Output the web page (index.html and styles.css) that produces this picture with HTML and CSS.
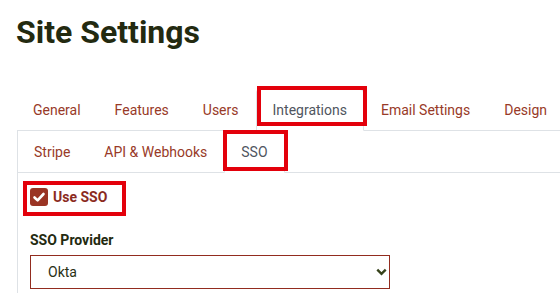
FILE: index.html
```html
<!DOCTYPE html>
<html lang="en">
<head>
    <meta charset="UTF-8">
    <meta name="viewport" content="width=device-width, initial-scale=1.0">
    <title>Site Settings</title>
    <link rel="stylesheet" href="styles.css">
</head>
<body>
    <div class="page">
        <h1 class="title">Site Settings</h1>

        <ul class="tabs main-tabs">
            <li><a href="#" class="tab">General</a></li>
            <li><a href="#" class="tab">Features</a></li>
            <li><a href="#" class="tab">Users</a></li>
            <li><a href="#" class="tab active marked marked-main">Integrations</a></li>
            <li><a href="#" class="tab">Email Settings</a></li>
            <li><a href="#" class="tab">Design</a></li>
        </ul>

        <div class="panel">
            <ul class="tabs sub-tabs">
                <li><a href="#" class="tab">Stripe</a></li>
                <li><a href="#" class="tab">API &amp; Webhooks</a></li>
                <li><a href="#" class="tab active marked marked-sub">SSO</a></li>
            </ul>

            <div class="panel-body">
                <label class="check marked marked-check">
                    <input type="checkbox" checked>
                    <span class="check-box">
                        <svg width="18" height="18" viewBox="0 0 18 18">
                            <polyline points="4.5,9.5 7.6,12.4 13.5,6" fill="none" stroke="#fff" stroke-width="2.6" stroke-linecap="round" stroke-linejoin="round"/>
                        </svg>
                    </span>
                    Use SSO
                </label>

                <label class="field-label" for="ssoProvider">SSO Provider</label>
                <div class="select-wrap">
                    <select id="ssoProvider" class="select">
                        <option>Okta</option>
                        <option>Azure AD</option>
                        <option>Google Workspace</option>
                    </select>
                    <svg class="chevron" width="11" height="8" viewBox="0 0 11 8">
                        <polyline points="1.3,1.6 5.5,5.8 9.7,1.6" fill="none" stroke="#36421a" stroke-width="2.4"/>
                    </svg>
                </div>
            </div>
        </div>
    </div>
</body>
</html>
```

FILE: styles.css
```css
body {
    margin: 0;
    padding: 0;
    font-family: 'Roboto', 'Liberation Sans', sans-serif;
    background: #fff;
    color: #232a10;
}

.page {
    padding: 13px 0 0 17px;
}

/* Heading */
.title {
    margin: 0;
    margin-left: -1px;
    font-size: 32px;
    line-height: 38px;
    font-weight: bold;
    color: #232a10;
}

/* Tabs */
.tabs {
    display: flex;
    list-style: none;
    margin: 0;
    padding: 0;
    border-bottom: 1px solid #dee2e6;
}

.main-tabs {
    margin-top: 38px;
}

.main-tabs li:first-child .tab {
    margin-left: -1px;
}

.tab {
    display: block;
    position: relative;
    margin-bottom: -1px;
    padding: 8px 16px;
    font-size: 14px;
    line-height: 24px;
    color: #983a28;
    text-decoration: none;
    white-space: nowrap;
    border: 1px solid transparent;
    border-top-left-radius: 4px;
    border-top-right-radius: 4px;
}

.tab.active {
    color: #4f5560;
    background-color: #fff;
    border-color: #dee2e6 #dee2e6 #fff;
}

.panel {
    border-left: 1px solid #dee2e6;
}

.sub-tabs {
    margin-left: -1px;
}

.panel-body {
    padding: 14px 12px 6px 12px;
}

/* Red annotation boxes */
.marked::after {
    content: '';
    position: absolute;
    border: 4px solid #e3000b;
    pointer-events: none;
}

.marked-main::after {
    left: 0;
    top: -4px;
    right: -4px;
    bottom: 4px;
}

.marked-sub::after {
    left: -2px;
    top: -2px;
    right: -4px;
    bottom: 1px;
}

.marked-check::after {
    left: -7px;
    top: -6px;
    right: -19px;
    bottom: -9px;
}

/* Checkbox */
.check {
    position: relative;
    display: inline-flex;
    align-items: center;
    gap: 5px;
    height: 20px;
    font-size: 14px;
    font-weight: bold;
    color: #8b2b1e;
}

.check input {
    display: none;
}

.check-box {
    display: flex;
    width: 18px;
    height: 18px;
    border-radius: 3px;
    background-color: #9a3424;
}

/* Select */
.field-label {
    display: block;
    margin-top: 20px;
    margin-bottom: 5px;
    font-size: 14px;
    line-height: 20px;
    font-weight: bold;
    color: #232a10;
}

.select-wrap {
    position: relative;
    width: 360px;
}

.select {
    display: block;
    width: 100%;
    height: 34px;
    padding: 0 30px 0 17px;
    font-family: 'Roboto', 'Liberation Sans', sans-serif;
    font-size: 14px;
    color: #2a3014;
    background: #fff;
    border: 1px solid #922c1f;
    border-radius: 0;
    appearance: none;
    -webkit-appearance: none;
}

.chevron {
    position: absolute;
    right: 3px;
    top: 13px;
    pointer-events: none;
}
```
